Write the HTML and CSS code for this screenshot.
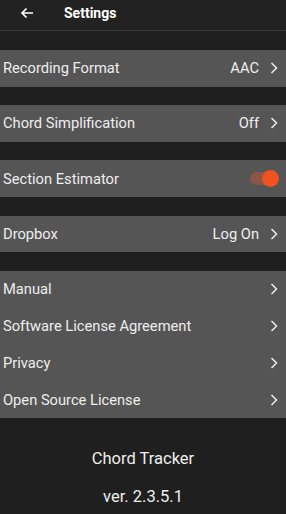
FILE: index.html
```html
<!DOCTYPE html>
<html lang="en">
<head>
    <meta charset="UTF-8">
    <meta name="viewport" content="width=device-width, initial-scale=1.0">
    <title>Settings</title>
    <link rel="stylesheet" href="styles.css">
</head>
<body>
<div class="header">
    <svg class="back" width="14" height="12" viewBox="0 0 14 12"><path d="M13 6H2M6.5 1.5L2 6l4.5 4.5" fill="none" stroke="#fff" stroke-width="1.7"/></svg>
    <span class="title">Settings</span>
</div>

<div class="list">
    <div class="group">
        <div class="row"><span class="label">Recording Format</span><span class="value">AAC</span><svg class="chev" width="8" height="12" viewBox="0 0 8 12"><path d="M1.5 1L6.5 6l-5 5" fill="none" stroke="#eee" stroke-width="1.5"/></svg></div>
    </div>
    <div class="group">
        <div class="row"><span class="label">Chord Simplification</span><span class="value">Off</span><svg class="chev" width="8" height="12" viewBox="0 0 8 12"><path d="M1.5 1L6.5 6l-5 5" fill="none" stroke="#eee" stroke-width="1.5"/></svg></div>
    </div>
    <div class="group">
        <div class="row"><span class="label">Section Estimator</span><span class="toggle"><span class="knob"></span></span></div>
    </div>
    <div class="group">
        <div class="row"><span class="label">Dropbox</span><span class="value">Log On</span><svg class="chev" width="8" height="12" viewBox="0 0 8 12"><path d="M1.5 1L6.5 6l-5 5" fill="none" stroke="#eee" stroke-width="1.5"/></svg></div>
    </div>
    <div class="group">
        <div class="row"><span class="label">Manual</span><svg class="chev" width="8" height="12" viewBox="0 0 8 12"><path d="M1.5 1L6.5 6l-5 5" fill="none" stroke="#eee" stroke-width="1.5"/></svg></div>
        <div class="row"><span class="label">Software License Agreement</span><svg class="chev" width="8" height="12" viewBox="0 0 8 12"><path d="M1.5 1L6.5 6l-5 5" fill="none" stroke="#eee" stroke-width="1.5"/></svg></div>
        <div class="row"><span class="label">Privacy</span><svg class="chev" width="8" height="12" viewBox="0 0 8 12"><path d="M1.5 1L6.5 6l-5 5" fill="none" stroke="#eee" stroke-width="1.5"/></svg></div>
        <div class="row"><span class="label">Open Source License</span><svg class="chev" width="8" height="12" viewBox="0 0 8 12"><path d="M1.5 1L6.5 6l-5 5" fill="none" stroke="#eee" stroke-width="1.5"/></svg></div>
    </div>
</div>

<div class="about">
    <div class="app">Chord Tracker</div>
    <div class="ver">ver. 2.3.5.1</div>
</div>
</body>
</html>
```

FILE: styles.css
```css
* { margin: 0; padding: 0; box-sizing: border-box; }
body { font-family: Roboto, "Noto Sans", sans-serif; background: #1f1f1f; color: #eee; width: 286px; height: 514px; overflow: hidden; }
.header { height: 31px; display: flex; align-items: center; padding: 0 0 4px 20px; background: #222; border-bottom: 1px solid #3a3a3a; }
.back { margin-right: 30px; }
.title { font-size: 14px; font-weight: bold; color: #fff; }
.list { display: flex; flex-direction: column; gap: 18.5px; padding-top: 18.8px; }
.group { background: #555; }
.row { height: 36.8px; display: flex; align-items: center; padding: 0 8px 0 3px; font-size: 14.7px; }
.label { flex: 1; }
.value { margin-right: 11px; }
.chev { display: block; }
.toggle { width: 26px; height: 13px; border-radius: 7px; background: rgba(240, 90, 40, 0.35); position: relative; margin-right: 2px; }
.knob { position: absolute; right: -3px; top: -2.5px; width: 17px; height: 17px; border-radius: 50%; background: #f05322; }
.about { text-align: center; font-size: 16.5px; padding-top: 31px; }
.app { margin-bottom: 19px; }
```
